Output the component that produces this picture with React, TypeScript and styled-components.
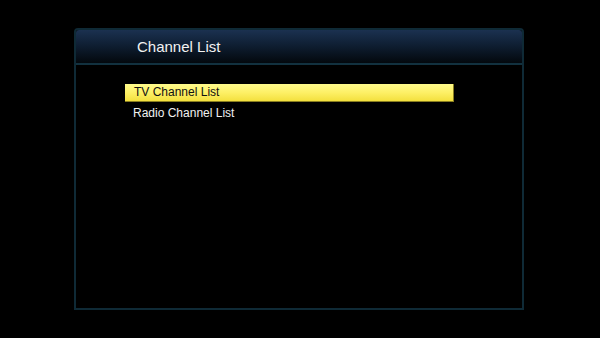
import React from "react";
import styled, { createGlobalStyle } from "styled-components";

const Global = createGlobalStyle`
  html, body { margin: 0; padding: 0; background: #000; }
  body { width: 600px; height: 338px; overflow: hidden; font-family: "Liberation Sans", Arial, sans-serif; }
`;

const Screen = styled.div`
  width: 600px;
  height: 338px;
  background: #000;
  padding: 28px 0 0 74px;
  box-sizing: border-box;
`;

const Panel = styled.div`
  width: 450px;
  height: 282px;
  box-sizing: border-box;
  border: 2px solid #0f2a36;
  border-radius: 4px 4px 0 0;
  display: flex;
  flex-direction: column;
  background: #000;
`;

const Header = styled.div`
  height: 35px;
  box-sizing: border-box;
  border-bottom: 2px solid #12313f;
  background: linear-gradient(to bottom, #1b3150 0%, #0f1f33 45%, #03080d 100%);
  border-radius: 3px 3px 0 0;
  padding-left: 61px;
  display: flex;
  align-items: center;
`;

const Title = styled.div`
  color: #f2f2f2;
  font-size: 15px;
  line-height: 18px;
`;

const List = styled.div`
  display: flex;
  flex-direction: column;
  gap: 3px;
  padding: 19px 0 0 49px;
`;

const Row = styled.div<{ $active?: boolean }>`
  width: 329px;
  height: 18px;
  box-sizing: border-box;
  padding-left: ${(p) => (p.$active ? "9px" : "8px")};
  font-size: 12px;
  line-height: 17px;
  color: ${(p) => (p.$active ? "#111" : "#f0f0f0")};
  background: ${(p) =>
    p.$active ? "linear-gradient(to bottom, #fffb8c 0%, #fdf066 50%, #f3e03e 100%)" : "transparent"};
  border-right: 1px solid ${(p) => (p.$active ? "#8a7f20" : "transparent")};
  border-bottom: 1px solid ${(p) => (p.$active ? "#8a7f20" : "transparent")};
`;

export default function App() {
  return (
    <>
      <Global />
      <Screen>
        <Panel>
          <Header>
            <Title>Channel List</Title>
          </Header>
          <List>
            <Row $active>TV Channel List</Row>
            <Row>Radio Channel List</Row>
          </List>
        </Panel>
      </Screen>
    </>
  );
}
